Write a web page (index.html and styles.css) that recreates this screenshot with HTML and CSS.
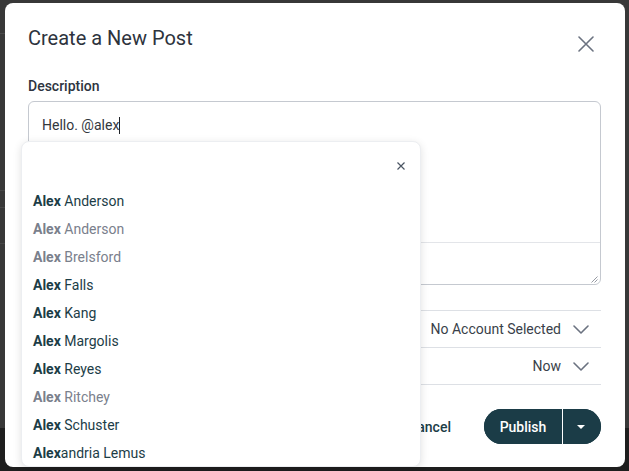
FILE: index.html
```html
<!DOCTYPE html>
<html lang="en">
<head>
<meta charset="utf-8">
<title>Create a New Post</title>
<link rel="stylesheet" href="styles.css">
</head>
<body>
<div class="backdrop">
  <div class="modal">
    <header class="modal-head">
      <h1 class="modal-title">Create a New Post</h1>
      <button class="close-btn" aria-label="Close">
        <svg viewBox="0 0 16 16" width="16" height="16"><path d="M1 1L15 15M15 1L1 15" stroke="#6b7280" stroke-width="1.6" fill="none" stroke-linecap="round"/></svg>
      </button>
    </header>

    <div class="field-label">Description</div>
    <div class="editor">
      <div class="editor-text">Hello. @alex<span class="caret"></span></div>
      <div class="editor-tools">
        <svg class="grip" viewBox="0 0 7 7" width="7" height="7"><path d="M6.5 0.5L0.5 6.5M6.5 3.5L3.5 6.5" stroke="#8a8f99" stroke-width="0.9" fill="none"/></svg>
      </div>
    </div>

    <div class="rows">
      <div class="row" aria-label="Social Account">
        <span class="row-value">No Account Selected
          <svg class="chev" viewBox="0 0 16 9" width="16" height="9"><path d="M1 1L8 8L15 1" stroke="#6b7280" stroke-width="1.6" fill="none" stroke-linecap="round" stroke-linejoin="round"/></svg>
        </span>
      </div>
      <div class="row" aria-label="Schedule">
        <span class="row-value">Now
          <svg class="chev" viewBox="0 0 16 9" width="16" height="9"><path d="M1 1L8 8L15 1" stroke="#6b7280" stroke-width="1.6" fill="none" stroke-linecap="round" stroke-linejoin="round"/></svg>
        </span>
      </div>
    </div>

    <div class="actions">
      <button class="cancel-btn">Cancel</button>
      <div class="split">
        <button class="split-main">Publish</button>
        <button class="split-toggle" aria-label="More">
          <svg viewBox="0 0 8 4" width="8" height="4"><path d="M0 0H8L4 4Z" fill="#ffffff"/></svg>
        </button>
      </div>
    </div>

    <div class="mention-menu">
      <div class="menu-head">
        <svg viewBox="0 0 8 8" width="8" height="8"><path d="M0.5 0.5L7.5 7.5M7.5 0.5L0.5 7.5" stroke="#4b5563" stroke-width="1.2" fill="none"/></svg>
      </div>
      <ul class="menu-list">
        <li class="item"><b>Alex</b> Anderson</li>
        <li class="item muted"><b>Alex</b> Anderson</li>
        <li class="item muted"><b>Alex</b> Brelsford</li>
        <li class="item"><b>Alex</b> Falls</li>
        <li class="item"><b>Alex</b> Kang</li>
        <li class="item"><b>Alex</b> Margolis</li>
        <li class="item"><b>Alex</b> Reyes</li>
        <li class="item muted"><b>Alex</b> Ritchey</li>
        <li class="item"><b>Alex</b> Schuster</li>
        <li class="item"><b>Alex</b>andria Lemus</li>
      </ul>
    </div>
  </div>
</div>
</body>
</html>
```

FILE: styles.css
```css
* { box-sizing: border-box; }

html, body {
  margin: 0;
  padding: 0;
}

body {
  width: 629px;
  height: 471px;
  overflow: hidden;
  font-family: Roboto, "Liberation Sans", Arial, sans-serif;
  background:
    linear-gradient(#4a4a4a, #4a4a4a) 0 33px / 10px 1px no-repeat,
    linear-gradient(#474747, #474747) 0 190px / 10px 1px no-repeat,
    linear-gradient(#474747, #474747) 0 207px / 10px 1px no-repeat,
    linear-gradient(#474747, #474747) 0 243px / 10px 1px no-repeat,
    linear-gradient(#1e1e1e, #1e1e1e) 0 428px / 100% 43px no-repeat,
    #383838;
}

.backdrop {
  padding: 3px 4px 0 5px;
}

.modal {
  position: relative;
  width: 620px;
  height: 464px;
  background: #ffffff;
  border-radius: 8px;
  padding: 23px 24px 23px 23px;
}

.modal-head {
  display: flex;
  justify-content: space-between;
  align-items: flex-start;
  height: 24px;
}

.modal-title {
  margin: 0;
  font-size: 20px;
  line-height: 24px;
  font-weight: 400;
  color: #2d333d;
}

.close-btn {
  border: 0;
  background: none;
  padding: 0;
  width: 16px;
  height: 16px;
  margin-top: 10px;
  margin-right: 7px;
  display: block;
}
.close-btn svg { display: block; }

.field-label {
  margin-top: 26px;
  font-size: 14px;
  line-height: 20px;
  font-weight: 500;
  color: #2e3440;
}

.editor {
  margin-top: 5px;
  height: 184px;
  border: 1px solid #c5c9d0;
  border-radius: 6px;
  display: flex;
  flex-direction: column;
}

.editor-text {
  height: 140px;
  padding: 13px 13px;
  font-size: 14px;
  line-height: 20px;
  color: #33373d;
}

.caret {
  display: inline-block;
  width: 1px;
  height: 17px;
  background: #1f2328;
  vertical-align: -4px;
}

.editor-tools {
  flex: 1;
  border-top: 1px solid #e3e5e9;
  display: flex;
  justify-content: flex-end;
  align-items: flex-end;
  padding: 0 2px 1px 0;
}
.grip { display: block; }

.rows {
  margin-top: 25px;
  border-bottom: 1px solid #dde0e5;
}

.row {
  height: 37px;
  border-top: 1px solid #dde0e5;
  display: flex;
  justify-content: flex-end;
  align-items: center;
  padding-right: 12px;
  font-size: 14px;
  line-height: 20px;
}

.row-value {
  display: flex;
  align-items: center;
  gap: 12px;
  color: #3a3f4a;
}
.chev { display: block; }

.actions {
  margin-top: 24px;
  display: flex;
  justify-content: flex-end;
  align-items: center;
  gap: 16px;
}

.cancel-btn {
  border: 0;
  background: none;
  font-family: inherit;
  font-size: 14px;
  font-weight: 500;
  color: #1c3d47;
  padding: 0 17px;
  height: 35px;
}

.split {
  display: flex;
  height: 35px;
  width: 117px;
  border-radius: 18px;
  overflow: hidden;
  background: #1b3c47;
}

.split-main {
  width: 79px;
  border: 0;
  background: #1b3c47;
  color: #ffffff;
  font-family: inherit;
  font-size: 14px;
  font-weight: 500;
  padding: 0;
  border-right: 1px solid #ffffff;
}

.split-toggle {
  flex: 1;
  border: 0;
  background: #1b3c47;
  padding: 0;
  display: flex;
  align-items: center;
  justify-content: center;
}
.split-toggle svg { display: block; margin-left: -2px; }

/* mention suggestions popover */
.mention-menu {
  position: absolute;
  left: 16px;
  top: 138px;
  width: 400px;
  height: 326px;
  background: #ffffff;
  border: 1px solid #eceef1;
  border-radius: 8px;
  box-shadow: 0 2px 8px rgba(0, 0, 0, 0.12);
  overflow: hidden;
}

.menu-head {
  height: 45px;
  display: flex;
  justify-content: flex-end;
  align-items: flex-start;
  padding: 20px 15px 0 0;
}
.menu-head svg { display: block; }

.menu-list {
  list-style: none;
  margin: 0;
  padding: 0;
}

.item {
  height: 28px;
  line-height: 28px;
  padding: 0 11px;
  font-size: 14px;
  color: #1c3d47;
  white-space: nowrap;
}
.item b { font-weight: 700; }
.item.muted { color: #7a808c; }
```
